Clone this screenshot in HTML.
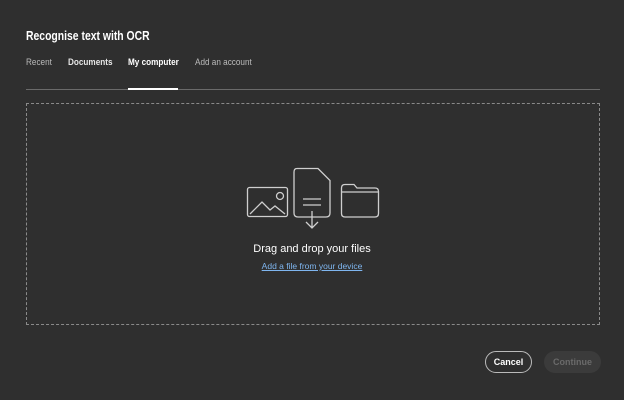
<!DOCTYPE html><html><head><style>
body{margin:0;width:624px;height:400px;background:#2f2f2f;font-family:"Liberation Sans",sans-serif;position:relative;overflow:hidden}
.a{position:absolute;transform-origin:left top;white-space:nowrap}
.t{font-size:9.5px;transform:scaleX(0.86)}
</style></head><body>
<div class="a" style="left:26px;top:28px;color:#fff;font-weight:bold;font-size:13px;transform:scaleX(0.8)">Recognise text with OCR</div>
<div class="a t" style="left:26px;top:57px;color:#bbb">Recent</div>
<div class="a t" style="left:68px;top:57px;color:#e6e6e6;font-weight:bold">Documents</div>
<div class="a t" style="left:128px;top:57px;color:#fff;font-weight:bold">My computer</div>
<div class="a t" style="left:195px;top:57px;color:#bbb">Add an account</div>
<div class="a" style="left:26px;top:89px;width:574px;height:1px;background:#6a6a6a"></div>
<div class="a" style="left:128px;top:88px;width:50px;height:2px;background:#fff"></div>
<div class="a" style="left:26px;top:103px;width:572px;height:220px;border:1px dashed #8a8a8a"></div>
<svg class="a" style="left:240px;top:162px" width="145" height="75" viewBox="240 162 145 75" fill="none" stroke="#cfcfcf" stroke-width="1.3">
<rect x="247.5" y="187.5" width="40" height="29" rx="2"/>
<path d="M250 214 L262 202 L270 210 L275 206 L285 214"/>
<circle cx="280" cy="196" r="3.5"/>
<path d="M297 168.5 H318 L330 180.5 V213 Q330 217 326 217 H298 Q294 217 294 213 V172 Q294 168.5 297 168.5 Z"/>
<path d="M303 199 H321 M303 205 H321"/>
<path d="M312 211 V228 M306 222 L312 228 L318 222"/>
<path d="M341.5 188 Q341.5 184.5 345 184.5 H354 L357 188 H375 Q378.5 188 378.5 191.5 V213.5 Q378.5 217 375 217 H345 Q341.5 217 341.5 213.5 Z"/>
<path d="M341.5 192 H378.5"/>
</svg>
<div class="a" style="left:0;width:624px;top:243px;text-align:center;color:#fff;font-size:11px">Drag and drop your files</div>
<div class="a" style="left:0;width:624px;top:261px;text-align:center;color:#7fb6f0;font-size:8.5px;text-decoration:underline">Add a file from your device</div>
<div class="a" style="left:485px;top:351px;width:45px;height:20px;border:1px solid #bbb;border-radius:12px;color:#fff;font-weight:bold;font-size:9px;line-height:20px;text-align:center">Cancel</div>
<div class="a" style="left:544px;top:351px;width:57px;height:22px;background:#3b3b3b;border-radius:12px;color:#6a6a6a;font-weight:bold;font-size:9px;line-height:22px;text-align:center">Continue</div>
</body></html>
